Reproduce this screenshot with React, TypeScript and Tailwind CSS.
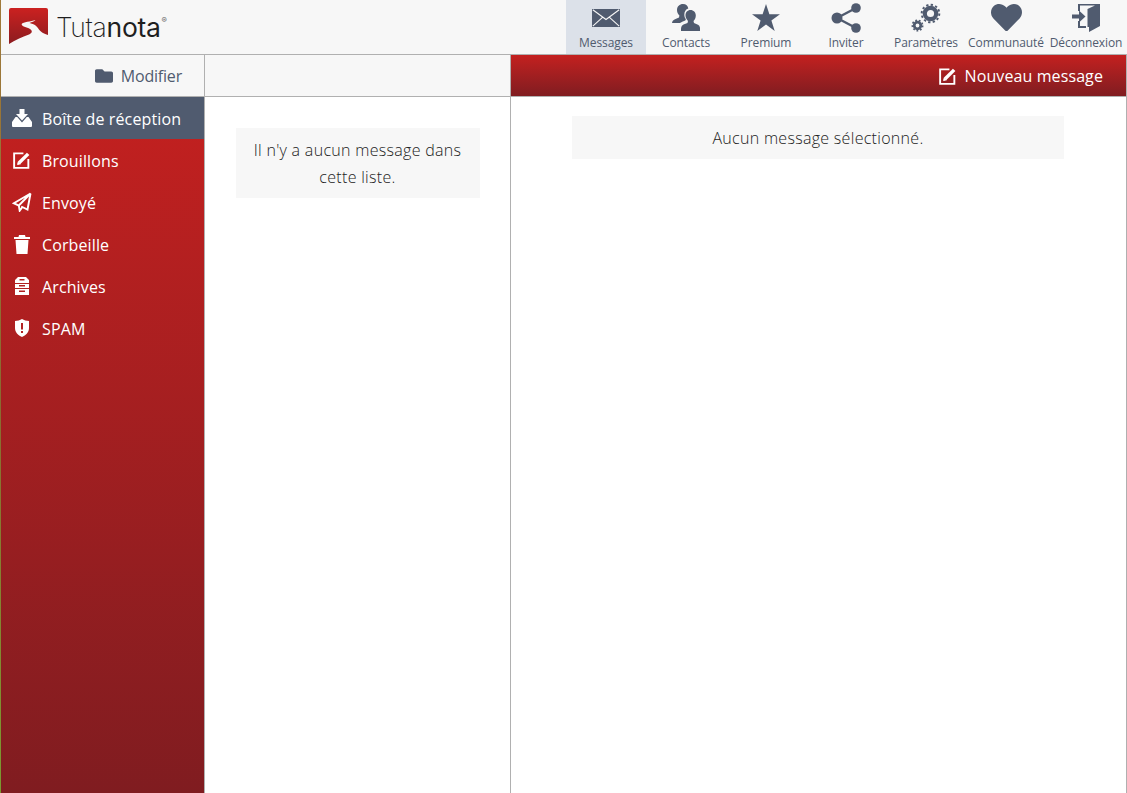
import { FaHeart, FaFolder } from "react-icons/fa"

function MailIcon() {
  return (
    <svg viewBox="0 0 28 18" className="h-[18px] w-[28px]" fill="#505b6f">
      <path d="M0 0h28v18H0z" />
      <path d="M.8.8 14 10.5 27.2.8M.8 17.2 10.8 8.2M27.2 17.2 17.2 8.2" fill="none" stroke="#f6f6f6" strokeWidth="1.1" />
    </svg>
  )
}

function ContactsIcon() {
  return (
    <svg viewBox="0 0 28 27" className="h-[27px] w-[28px]" fill="#505b6f">
      <path d="M11 0c3 0 5 2 5.300 4.500-2.500.8-4 3-4 6 0 2 .6 3.600 1.600 4.800l-.6 1.200c-1.500.6-3.500 1.500-5.300 2.500H0c.3-2 1-3 3-3.800l4-1.700.4-2C5.800 10 5 8 5 6c0-3.500 2.600-6 6-6Z" />
      <path d="M18.500 6c3 0 5.300 2.300 5.300 5.500 0 2.300-1 4.300-2.300 5.500l.5 2 4 1.700c1.300.6 2 2 2.200 4.300V27H9v-2.300c.2-2 1-3.500 2.500-4.200l4-1.600.5-2C14.800 15.700 13.500 13.800 13.500 11.500 13.500 8.300 15.500 6 18.500 6Z" />
    </svg>
  )
}

function StarIcon() {
  return (
    <svg viewBox="0 0 28 27" className="h-[27px] w-[28px]" fill="#505b6f">
      <path d="M14 0l3.400 10.200H28l-8.600 6.300L22.700 27 14 20.600 5.300 27l3.300-10.500L0 10.200h10.600Z" />
    </svg>
  )
}

function ShareIcon() {
  return (
    <svg viewBox="0 0 30 30" className="h-[30px] w-[30px]" fill="#505b6f">
      <circle cx="25" cy="5" r="4.800" />
      <circle cx="25" cy="25" r="4.800" />
      <circle cx="6" cy="15" r="5.500" />
      <path d="M6 15 25 5M6 15l19 10" stroke="#505b6f" strokeWidth="2.500" />
    </svg>
  )
}

function LogoutIcon() {
  return (
    <svg viewBox="0 0 28 28" className="h-[28px] w-[28px]" fill="#505b6f">
      <path d="M6 0h22v22l-11 6v-5h-1.500V5L23 1.500H8V7H6ZM6 17h2v5h6v2H6Z" />
      <path d="M0 10.500h7V6.500l6.500 6-6.500 6v-4H0Z" />
    </svg>
  )
}

function GearsIcon() {
  return (
    <svg viewBox="0 0 30 30" className="h-[30px] w-[30px]" fill="none" stroke="#505b6f">
      <circle cx="19.500" cy="10.500" r="5.700" strokeWidth="4.200" />
      <circle cx="19.500" cy="10.500" r="8.800" strokeWidth="2" strokeDasharray="2.300 2.300" />
      <circle cx="6.500" cy="22.500" r="3.300" strokeWidth="2.800" />
      <circle cx="6.500" cy="22.500" r="5.200" strokeWidth="1.600" strokeDasharray="1.800 1.800" />
    </svg>
  )
}

function EditIcon() {
  return (
    <svg viewBox="0 0 19 19" className="h-[18px] w-[18px]" fill="none" stroke="#fff">
      <path d="M11 2.500H1.200v15.300h15V8.500" strokeWidth="2" />
      <path d="M6.800 12.200 16 3" strokeWidth="3.600" />
      <path d="M4.800 14.300l.8-3.200 2.400 2.400Z" fill="#fff" strokeWidth="1" />
    </svg>
  )
}

function PlaneIcon() {
  return (
    <svg viewBox="0 0 20 20" className="h-[20px] w-[20px]" fill="none" stroke="#fff" strokeWidth="1.900">
      <path d="M18.500 1.500 1.800 11.200l5 2.300L18.500 1.500Z" />
      <path d="M18.500 1.500 15.500 17.500l-6.200-3" />
      <path d="M6.800 13.500l.9 5.200 2.700-3.700" />
    </svg>
  )
}

function InboxIcon() {
  return (
    <svg viewBox="0 0 20 18" className="h-[18px] w-[20px]" fill="#fff">
      <path d="M7.500 0h5v5H16l-6 6.500L4 5h3.500Z" />
      <path d="M3.500 8H5.200L10 13.500 14.800 8h1.700L20 13v4a1 1 0 0 1-1 1H1a1 1 0 0 1-1-1v-4Z" />
    </svg>
  )
}

function ArchiveIcon() {
  return (
    <svg viewBox="0 0 14 18" className="h-[18px] w-[14px]" fill="#fff">
      <path d="M3 0h8l3 3v3H0V3Zm1.500 2v1.500h5V2ZM0 7h14v4H0Zm4 1v1.500h6V8ZM0 12h14v6H0Zm4 1.500V15h6v-1.500Z" fillRule="evenodd" />
    </svg>
  )
}

function TrashIcon() {
  return (
    <svg viewBox="0 0 16 19" className="h-[19px] w-[16px]" fill="#fff">
      <path d="M5 0h6l.5 2H16v2H0V2h4.500ZM1.500 5h13L13.500 19h-11Z" />
    </svg>
  )
}

function ShieldIcon() {
  return (
    <svg viewBox="0 0 14 18" className="h-[18px] w-[14px]">
      <path d="M7 0c2 1.200 4.500 2 7 2v7c0 4-3 7.500-7 9-4-1.500-7-5-7-9V2c2.500 0 5-.8 7-2Z" fill="#fff" />
      <path d="M6 4h2v6.500H6ZM6 12h2v2H6Z" fill="#b22122" />
    </svg>
  )
}

function Logo() {
  return (
    <svg viewBox="0 0 39 36" className="h-[36px] w-[39px]">
      <defs>
        <linearGradient id="logo" x1="0" y1="0" x2="0" y2="1">
          <stop offset="0" stopColor="#cb2120" />
          <stop offset="1" stopColor="#8c1c20" />
        </linearGradient>
      </defs>
      <path
        d="M2 0H37a2 2 0 0 1 2 2V27C33 25.500 30.500 22.500 28.500 19.500 26.500 16.500 24 16 20.500 15 22.500 14 25.500 13.500 26.500 12 22 13.500 14 14 12.700 16 12 18.500 18 19 21 21 24 23 23 25 20 26.500 13 29 6 32 0 36V2a2 2 0 0 1 2-2Z"
        fill="url(#logo)"
      />
    </svg>
  )
}

const navItems = [
  { label: "Messages", icon: <MailIcon />, active: true },
  { label: "Contacts", icon: <ContactsIcon /> },
  { label: "Premium", icon: <StarIcon /> },
  { label: "Inviter", icon: <ShareIcon /> },
  { label: "Paramètres", icon: <GearsIcon /> },
  { label: "Communauté", icon: <FaHeart className="text-[31px] text-[#505b6f]" /> },
  { label: "Déconnexion", icon: <LogoutIcon /> },
]

const folders = [
  { label: "Boîte de réception", icon: <InboxIcon />, active: true },
  { label: "Brouillons", icon: <EditIcon /> },
  { label: "Envoyé", icon: <PlaneIcon /> },
  { label: "Corbeille", icon: <TrashIcon /> },
  { label: "Archives", icon: <ArchiveIcon /> },
  { label: "SPAM", icon: <ShieldIcon /> },
]

export default function App() {
  return (
    <div className="flex h-[793px] w-[1127px] overflow-hidden bg-white font-['Open_Sans',sans-serif] text-[#222222]">
      {/* window edge */}
      <div className="w-px shrink-0 bg-gradient-to-b from-[#a07a3a] via-[#8a6a30] to-[#7a9a30]" />

      <div className="flex min-w-0 flex-1 flex-col">
        {/* Header */}
        <header className="flex h-[55px] shrink-0 items-stretch justify-between border-b border-[#b0b0b0] bg-[#f7f7f7] pr-px">
          <div className="flex items-start pl-[8px] pt-[8px]">
            <Logo />
            <div className="ml-[8px] mt-[2px] flex items-start font-['Inter',sans-serif] text-[26.5px] leading-[34px] tracking-[-0.3px] text-[#1f1f1f]">
              <span className="font-extralight">Tuta</span>
              <span className="font-normal">nota</span>
              <span className="ml-[1px] mt-[-7px] text-[8px] text-[#666666]">®</span>
            </div>
          </div>
          <nav className="flex">
            {navItems.map((item) => (
              <div
                key={item.label}
                className={`flex w-[80px] flex-col items-center whitespace-nowrap ${item.active ? "bg-[#dce1e9]" : ""}`}
              >
                <div className="flex h-[35px] items-center justify-center">{item.icon}</div>
                <span className="text-[12px] leading-[16px] tracking-[-0.1px] text-[#505b6f]">{item.label}</span>
              </div>
            ))}
          </nav>
        </header>

        {/* Toolbar */}
        <div className="flex h-[42px] shrink-0 border-b border-[#b0b0b0]">
          <div className="flex w-[204px] items-center justify-end gap-[8px] border-r border-[#b0b0b0] bg-[#f7f7f7] pr-[22px] text-[#505b6f]">
            <FaFolder className="text-[18px]" />
            <span className="text-[16px] tracking-[-0.2px]">Modifier</span>
          </div>
          <div className="w-[306px] border-r border-[#b0b0b0] bg-[#f7f7f7]" />
          <div className="flex flex-1 items-center justify-end gap-[8px] border-r border-[#b0b0b0] bg-gradient-to-b from-[#c4201f] to-[#801c20] pr-[23px] text-white">
            <EditIcon />
            <span className="text-[16px] tracking-[0.1px]">Nouveau message</span>
          </div>
        </div>

        {/* Content */}
        <main className="flex min-h-0 flex-1">
          <aside className="w-[204px] shrink-0 border-r border-[#b0b0b0] bg-gradient-to-b from-[#c4201f] to-[#801c20] text-white">
            {folders.map((f) => (
              <div key={f.label} className={`flex h-[42px] items-center ${f.active ? "bg-[#505b6f]" : ""}`}>
                <div className="flex w-[41px] justify-center">{f.icon}</div>
                <span className="pt-[2px] text-[16px] tracking-[0.12px]">{f.label}</span>
              </div>
            ))}
          </aside>
          <section className="w-[306px] shrink-0 border-r border-[#b0b0b0] pt-[31px]">
            <div className="mx-auto w-[244px] bg-[#f7f7f7] px-[10px] pb-[7px] pt-[9px] text-center text-[16px] font-light leading-[27px] tracking-[0.3px]">
              Il n'y a aucun message dans cette liste.
            </div>
          </section>
          <section className="flex-1 border-r border-[#b0b0b0] pt-[19px]">
            <div className="ml-[61px] flex h-[43px] w-[492px] items-center justify-center bg-[#f7f7f7] text-[16px] font-light tracking-[0.3px]">
              Aucun message sélectionné.
            </div>
          </section>
        </main>
      </div>
    </div>
  )
}
